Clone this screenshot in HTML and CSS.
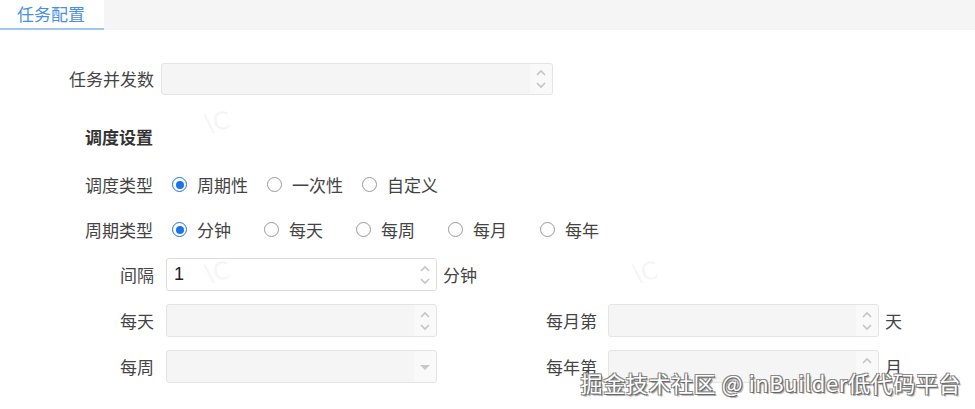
FILE: index.html
```html
<!DOCTYPE html>
<html lang="zh">
<head>
<meta charset="utf-8">
<link rel="stylesheet" href="styles.css">
</head>
<body>
<div class="page">
  <div class="tabs">
    <div class="tab">任务配置</div>
  </div>
  <div class="form">
    <div class="row-concurrency">
      <span class="label lbl-wide">任务并发数</span>
      <div class="input disabled wide">
        <span class="spin"><svg width="12" height="24" viewBox="0 0 12 24"><path d="M2 8 L6 4 L10 8" /><path d="M2 16 L6 20 L10 16" /></svg></span>
      </div>
    </div>
    <div class="section-title">调度设置</div>
    <div class="radio-row">
      <span class="label lbl-left">调度类型</span>
      <label class="opt opt1"><span class="radio on"></span>周期性</label>
      <label class="opt opt1"><span class="radio"></span>一次性</label>
      <label class="opt opt1"><span class="radio"></span>自定义</label>
    </div>
    <div class="radio-row">
      <span class="label lbl-left">周期类型</span>
      <label class="opt opt2"><span class="radio on"></span>分钟</label>
      <label class="opt opt2"><span class="radio"></span>每天</label>
      <label class="opt opt2"><span class="radio"></span>每周</label>
      <label class="opt opt2"><span class="radio"></span>每月</label>
      <label class="opt opt2"><span class="radio"></span>每年</label>
    </div>
    <div class="grid">
      <div class="field left">
        <span class="label lbl-sub">间隔</span>
        <div class="input">
          <span class="value">1</span>
          <span class="spin"><svg width="12" height="24" viewBox="0 0 12 24"><path d="M2 8 L6 4 L10 8" /><path d="M2 16 L6 20 L10 16" /></svg></span>
        </div>
        <span class="suffix">分钟</span>
      </div>
      <div class="field"></div>
      <div class="field left">
        <span class="label lbl-sub">每天</span>
        <div class="input disabled">
          <span class="spin"><svg width="12" height="24" viewBox="0 0 12 24"><path d="M2 8 L6 4 L10 8" /><path d="M2 16 L6 20 L10 16" /></svg></span>
        </div>
      </div>
      <div class="field right">
        <span class="label lbl-right">每月第</span>
        <div class="input disabled">
          <span class="spin"><svg width="12" height="24" viewBox="0 0 12 24"><path d="M2 8 L6 4 L10 8" /><path d="M2 16 L6 20 L10 16" /></svg></span>
        </div>
        <span class="suffix">天</span>
      </div>
      <div class="field left">
        <span class="label lbl-sub">每周</span>
        <div class="input disabled">
          <span class="spin drop"><svg width="12" height="8" viewBox="0 0 12 8"><polygon points="1,2 11,2 6,7" /></svg></span>
        </div>
      </div>
      <div class="field right">
        <span class="label lbl-right">每年第</span>
        <div class="input disabled">
          <span class="spin"><svg width="12" height="24" viewBox="0 0 12 24"><path d="M2 8 L6 4 L10 8" /></svg></span>
        </div>
        <span class="suffix">月</span>
      </div>
    </div>
  </div>
  <span class="faint f1">\C</span>
  <span class="faint f2">\C</span>
  <span class="faint f3">\C</span>
  <div class="watermark">掘金技术社区 @ inBuilder低代码平台</div>
</div>
</body>
</html>
```
FILE: styles.css
```css
* { box-sizing: border-box; }
html, body { margin: 0; padding: 0; background: #fff; }
body {
  font-family: "Noto Sans CJK SC", "Noto Sans", sans-serif;
  font-size: 17px;
  color: #444;
  width: 975px;
  height: 409px;
  overflow: hidden;
}
.page { position: relative; width: 975px; height: 409px; }
.tabs {
  height: 30px;
  background: #f5f5f5;
  display: flex;
}
.tab {
  width: 104px;
  height: 30px;
  background: #fff;
  color: #4a90e2;
  font-size: 17px;
  line-height: 27px;
  padding-left: 17px;
  border-bottom: 2px solid #9fc8ee;
}
.form { padding-top: 33px; }
.label { line-height: 24px; white-space: nowrap; }
.row-concurrency { display: flex; align-items: center; height: 32px; }
.lbl-wide { width: 154px; text-align: right; margin-right: 7px; }
.input {
  position: relative;
  width: 271px;
  height: 33px;
  border: 1px solid #dcdcdc;
  border-radius: 3px;
  background: #fff;
  display: flex;
  align-items: center;
}
.input.wide { width: 392px; height: 32px; }
.input.disabled { background: #f5f5f5; border-color: #e4e4e4; }
.value { padding-left: 7px; font-family: "Liberation Sans", sans-serif; font-size: 18px; color: #222; }
.spin {
  margin-left: auto;
  width: 22px;
  height: 100%;
  display: flex;
  align-items: center;
  justify-content: center;
  background: #fff;
  border-radius: 0 3px 3px 0;
}
.input.disabled .spin { background: #f9f9f9; }
.spin svg path { fill: none; stroke: #c4c4c4; stroke-width: 1.6; }
.spin svg polygon { fill: #c8c8c8; }
.section-title {
  margin-top: 30px;
  padding-left: 85px;
  font-weight: bold;
  color: #333;
  line-height: 24px;
}
.radio-row { display: flex; align-items: center; height: 45px; padding-left: 85px; }
.section-title + .radio-row { margin-top: 13px; }
.lbl-left { width: 69px; margin-right: 18px; }
.opt { display: flex; align-items: center; line-height: 24px; white-space: nowrap; }
.opt1 { margin-right: 19px; }
.opt2 { width: 92px; }
.radio {
  width: 15px;
  height: 15px;
  border: 1px solid #999;
  border-radius: 50%;
  margin-right: 10px;
  position: relative;
  background: #fff;
}
.radio.on { border-color: #1a73e8; }
.radio.on::after {
  content: "";
  position: absolute;
  left: 2.5px; top: 2.5px;
  width: 8px; height: 8px;
  border-radius: 50%;
  background: #1a73e8;
}
.grid {
  display: grid;
  grid-template-columns: 520px 455px;
  row-gap: 13px;
  margin-top: 6px;
}
.field { display: flex; align-items: center; height: 33px; }
.lbl-sub { width: 154px; text-align: right; margin-right: 12px; }
.lbl-right { width: 77px; text-align: right; margin-right: 11px; }
.suffix { margin-left: 6px; line-height: 24px; }
.faint {
  position: absolute;
  font-family: "DejaVu Sans", sans-serif;
  font-size: 24px;
  color: #f5f5f5;
  transform: rotate(-10deg);
}
.f1 { left: 205px; top: 108px; }
.f2 { left: 205px; top: 258px; }
.f3 { left: 633px; top: 258px; }
.watermark {
  position: absolute;
  right: 14px;
  bottom: 13px;
  font-size: 22px;
  letter-spacing: 0.6px;
  line-height: 28px;
  color: #fff;
  white-space: nowrap;
  text-shadow: 1px 1px 0 #666, -1px -1px 0 #888, 1px -1px 0 #888, -1px 1px 0 #888, 2px 2px 1px rgba(0,0,0,0.35);
}
```
